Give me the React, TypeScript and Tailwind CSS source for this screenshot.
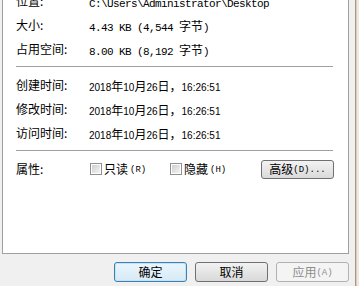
import React from 'react';

const cjk = '"Noto Sans CJK SC", "Liberation Sans", sans-serif';
const mono = '"Liberation Mono", monospace';
const sans = '"Liberation Sans", sans-serif';

// splits text so ASCII runs use a Latin font and the rest uses the CJK font
function Mixed({ text, latin, latinSize, track }: { text: string; latin: string; latinSize: string; track?: string }) {
  const parts = text.match(/[\x00-\x7f]+|[^\x00-\x7f]+/g) || [];
  return (
    <span className="whitespace-pre">
      {parts.map((p, i) =>
        /^[\x00-\x7f]+$/.test(p) ? (
          <span key={i} style={{ fontFamily: latin, fontSize: latinSize, letterSpacing: track }}>{p}</span>
        ) : (
          <span key={i} className="text-[12px]" style={{ fontFamily: cjk }}>{p}</span>
        )
      )}
    </span>
  );
}

function Row({ label, value, date }: { label: string; value: string; date?: boolean }) {
  return (
    <div className="flex h-[24px] items-center">
      <div className="w-[73px] shrink-0 text-[12px] text-black" style={{ fontFamily: cjk }}>{label}</div>
      <div className="text-black leading-none">
        {date ? (
          <Mixed text={value} latin={sans} latinSize="10px" />
        ) : (
          <Mixed text={value} latin={mono} latinSize="11px" track="-0.6px" />
        )}
      </div>
    </div>
  );
}

function Hot({ text }: { text: string }) {
  return <span className="text-[9px] leading-none mt-[2px]" style={{ fontFamily: mono }}>{text}</span>;
}

function Checkbox({ label, hot, width }: { label: string; hot: string; width: string }) {
  return (
    <div className={`flex items-center gap-[2px] shrink-0 whitespace-nowrap text-black ${width}`}>
      <div className="w-[12px] h-[12px] shrink-0 border border-[#8e8f8f] bg-white p-[1px]">
        <div className="w-full h-full bg-gradient-to-br from-[#cfcfcf] to-[#f4f4f4]" />
      </div>
      <span className="text-[12px]" style={{ fontFamily: cjk }}>{label}</span>
      <Hot text={hot} />
    </div>
  );
}

function Separator() {
  return <div className="h-px w-[317px] bg-[#a0a0a0]" />;
}

export default function App() {
  return (
    <div className="flex w-[359px] h-[286px] overflow-hidden bg-[#f0f0f0]">
      <div className="flex flex-col w-[355px]">
        <div className="ml-[2px] w-[347px] h-[254px] bg-white border-l border-r border-b border-[#a0a0a0] pl-[13px] overflow-hidden">
          <div className="-mt-[11px]">
            <Row label="位置:" value="C:\Users\Administrator\Desktop" />
          </div>
          <Row label="大小:" value="4.43 KB (4,544 字节)" />
          <Row label="占用空间:" value="8.00 KB (8,192 字节)" />
          <div className="mt-[5px] mb-[6px]"><Separator /></div>
          <Row label="创建时间:" value="2018年10月26日，16:26:51" date />
          <Row label="修改时间:" value="2018年10月26日，16:26:51" date />
          <Row label="访问时间:" value="2018年10月26日，16:26:51" date />
          <div className="mt-[5px] mb-[6px]"><Separator /></div>
          <div className="flex h-[24px] items-center">
            <div className="w-[74px] shrink-0 text-[12px] text-black" style={{ fontFamily: cjk }}>属性:</div>
            <Checkbox label="只读" hot="(R)" width="w-[80px]" />
            <Checkbox label="隐藏" hot="(H)" width="w-[91px]" />
            <button className="w-[73px] h-[19px] shrink-0 whitespace-nowrap rounded-[3px] border border-[#707070] bg-gradient-to-b from-[#f3f3f3] to-[#dadada] flex items-center justify-center text-black">
              <span className="text-[12px]" style={{ fontFamily: cjk }}>高级</span>
              <Hot text="(D)..." />
            </button>
          </div>
        </div>
        <div className="flex justify-end gap-[8px] pr-[6px] pt-[8px]">
          <button className="w-[73px] h-[20px] rounded-[3px] border border-[#3c7fb1] bg-gradient-to-b from-[#eaf6fd] to-[#d7eaf5] shadow-[inset_0_0_0_1px_#c3e4f8] text-[12px] text-black" style={{ fontFamily: cjk }}>确定</button>
          <button className="w-[73px] h-[20px] rounded-[3px] border border-[#707070] bg-gradient-to-b from-[#f2f2f2] to-[#d9d9d9] text-[12px] text-black" style={{ fontFamily: cjk }}>取消</button>
          <button className="w-[73px] h-[20px] rounded-[3px] border border-[#adb2b5] bg-[#f4f4f4] flex items-center justify-center whitespace-nowrap text-[#8d8d8d]">
            <span className="text-[12px]" style={{ fontFamily: cjk }}>应用</span>
            <Hot text="(A)" />
          </button>
        </div>
      </div>
      <div className="w-px bg-[#a8977a]" />
      <div className="w-px bg-[#d9cfbd]" />
      <div className="flex-1 bg-[#ece9e2]" />
    </div>
  );
}
